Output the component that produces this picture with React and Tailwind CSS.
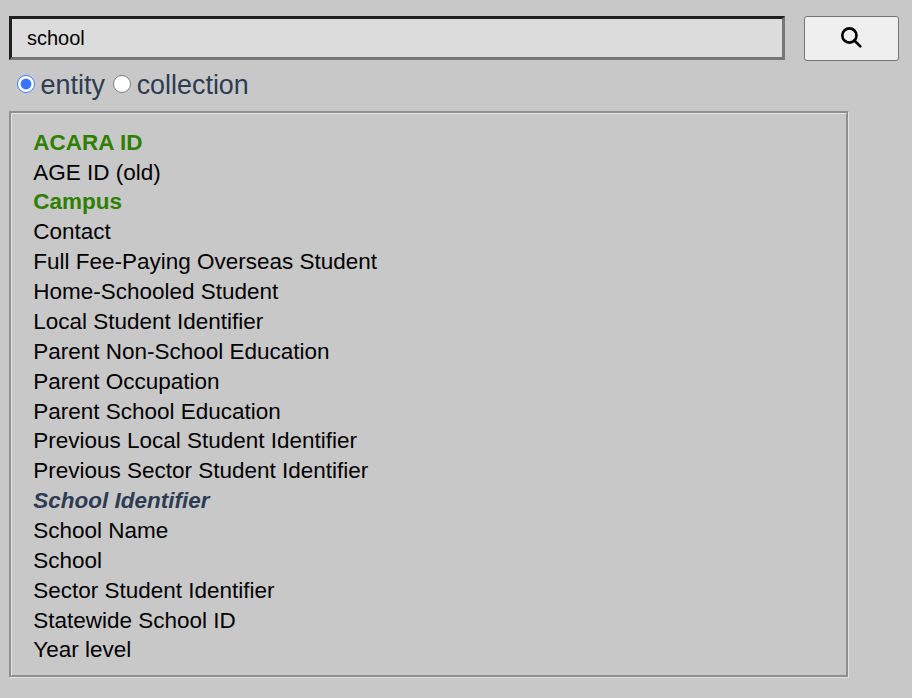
import React from "react";

const results = [
  { name: "ACARA ID", kind: "match" },
  { name: "AGE ID (old)" },
  { name: "Campus", kind: "match" },
  { name: "Contact" },
  { name: "Full Fee-Paying Overseas Student" },
  { name: "Home-Schooled Student" },
  { name: "Local Student Identifier" },
  { name: "Parent Non-School Education" },
  { name: "Parent Occupation" },
  { name: "Parent School Education" },
  { name: "Previous Local Student Identifier" },
  { name: "Previous Sector Student Identifier" },
  { name: "School Identifier", kind: "current" },
  { name: "School Name" },
  { name: "School" },
  { name: "Sector Student Identifier" },
  { name: "Statewide School ID" },
  { name: "Year level" },
];

const kinds = {
  match: "font-bold text-[#308000]",
  current: "font-bold italic text-[#2e3c53]",
};

function SearchBar() {
  return (
    <div className="flex items-start gap-[19px]">
      <input
        type="text"
        defaultValue="school"
        className="h-[44px] w-[776px] border-[3px] border-t-[#1f1f1f] border-l-[#1f1f1f] border-r-[#767676] border-b-[#767676] bg-[#dcdcdc] px-[15px] text-[20px] text-black"
      />
      <button
        aria-label="Search"
        className="flex h-[45px] w-[95px] items-center justify-center rounded-[3px] border border-[#767676] bg-[#efefef]"
      >
        <svg width="23" height="23" viewBox="0 0 23 23" fill="none" stroke="black" className="overflow-visible">
          <circle cx="9.4" cy="8.5" r="7.1" strokeWidth="2.6" />
          <path d="M14.4 13.5 L20.3 19.4" strokeWidth="2.7" strokeLinecap="round" />
        </svg>
      </button>
    </div>
  );
}

function Choice({ label, checked }) {
  return (
    <label className="flex items-center gap-[5.6px]">
      <input type="radio" name="scope" defaultChecked={checked} className="size-[18px] accent-[#3875ff]" />
      <span className="pt-[2px]">{label}</span>
    </label>
  );
}

export default function App() {
  return (
    <main className="h-[698px] w-[912px] overflow-hidden bg-[#c8c8c8] pt-[16px] pl-[9px] font-['Liberation_Sans',Arial,sans-serif]">
      <SearchBar />
      <div className="flex h-[50px] items-start gap-[8.2px] pt-[7px] pl-[8px] text-[26.9px] leading-[30px] text-[#2e3c53]">
        <Choice label="entity" checked />
        <Choice label="collection" />
      </div>
      <ul className="h-[567px] w-[840px] border-[3px] border-[#e3e3e3] [border-style:groove] pt-[13.77px] pl-[21.3px] text-[22.49px] leading-[29.867px] text-black">
        {results.map((item) => (
          <li key={item.name} className={kinds[item.kind]}>
            {item.name}
          </li>
        ))}
      </ul>
    </main>
  );
}
